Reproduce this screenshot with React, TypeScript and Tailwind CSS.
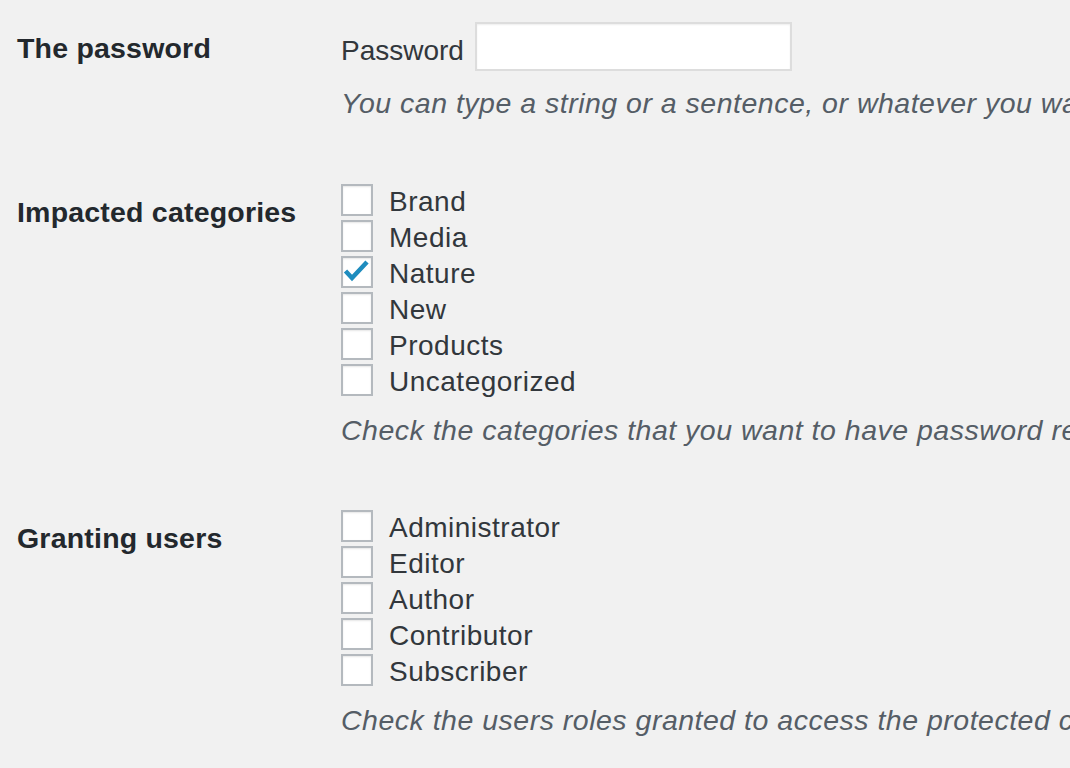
import React from 'react';

type Option = { label: string; checked?: boolean };

const categories: Option[] = [
  { label: 'Brand' },
  { label: 'Media' },
  { label: 'Nature', checked: true },
  { label: 'New' },
  { label: 'Products' },
  { label: 'Uncategorized' },
];

const roles: Option[] = [
  { label: 'Administrator' },
  { label: 'Editor' },
  { label: 'Author' },
  { label: 'Contributor' },
  { label: 'Subscriber' },
];

const CheckBox = ({ checked }: { checked?: boolean }) => (
  <span className="flex h-[32px] w-[32px] shrink-0 items-center justify-center border-2 border-[#b4b9be] bg-white shadow-[inset_0_1px_2px_rgba(0,0,0,0.1)]">
    {checked && (
      <svg width="28" height="28" viewBox="0 0 28 28">
        <polyline
          points="2.5,13 9,20 24,4"
          fill="none"
          stroke="#1e8cbe"
          strokeWidth="4.5"
          strokeLinejoin="miter"
        />
      </svg>
    )}
  </span>
);

const CheckList = ({ items }: { items: Option[] }) => (
  <div className="flex flex-col">
    {items.map((item) => (
      <label key={item.label} className="flex items-start gap-[16px]">
        <CheckBox checked={item.checked} />
        <span className="text-[28px] leading-[36px] tracking-[0.5px] text-[#32373c]">
          {item.label}
        </span>
      </label>
    ))}
  </div>
);

const Description = ({ children, top = 'mt-[12px]' }: { children: React.ReactNode; top?: string }) => (
  <p className={`${top} whitespace-nowrap text-[28.5px] italic leading-[36px] tracking-[0.5px] text-[#555d66]`}>
    {children}
  </p>
);

const Row = ({
  title,
  labelTop,
  children,
}: {
  title: string;
  labelTop: string;
  children: React.ReactNode;
}) => (
  <div className="flex">
    <div className={`w-[324px] shrink-0 ${labelTop}`}>
      <h3 className="text-[28.5px] font-bold leading-[36px] tracking-[0.2px] text-[#23282d]">
        {title}
      </h3>
    </div>
    <div className="min-w-0">{children}</div>
  </div>
);

export default function App() {
  return (
    <div
      className="h-[768px] w-[1070px] overflow-hidden bg-[#f1f1f1] pl-[17px] pt-[22px]"
      style={{ fontFamily: '"Liberation Sans", Arial, sans-serif' }}
    >
      <Row title="The password" labelTop="pt-[8px]">
        <div className="flex items-start gap-[11px]">
          <span className="pt-[11px] text-[28px] leading-[36px] text-[#32373c]">Password</span>
          <input
            type="password"
            className="h-[49px] w-[317px] border-2 border-[#dddddd] bg-white shadow-[inset_0_1px_2px_rgba(0,0,0,0.07)] outline-none"
          />
        </div>
        <Description top="mt-[14px]">
          You can type a string or a sentence, or whatever you want
        </Description>
      </Row>

      <div className="mt-[63px]">
        <Row title="Impacted categories" labelTop="pt-[10px]">
          <CheckList items={categories} />
          <Description>
            Check the categories that you want to have password restriction
          </Description>
        </Row>
      </div>

      <div className="mt-[62px]">
        <Row title="Granting users" labelTop="pt-[10px]">
          <CheckList items={roles} />
          <Description>Check the users roles granted to access the protected content</Description>
        </Row>
      </div>
    </div>
  );
}
